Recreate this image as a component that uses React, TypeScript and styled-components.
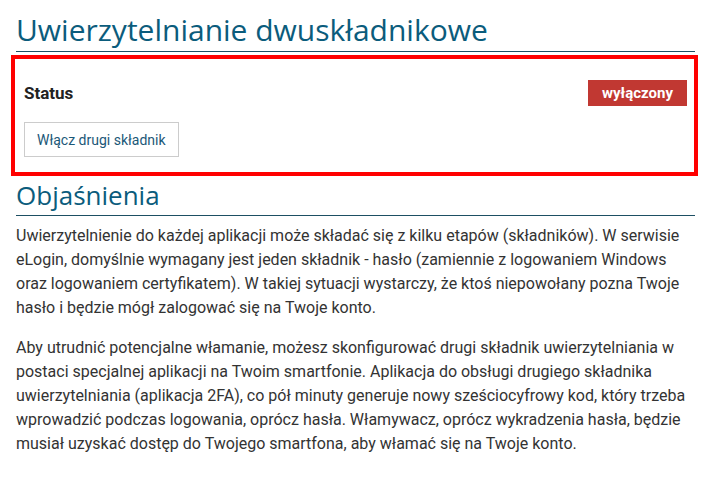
import React from 'react';
import styled, { createGlobalStyle } from 'styled-components';

const GlobalStyle = createGlobalStyle`
  html, body {
    margin: 0;
    padding: 0;
    background: #fff;
  }
  body {
    font-family: Roboto, "Liberation Sans", sans-serif;
    color: #333;
  }
`;

const Page = styled.div`
  padding: 0 11px 0 16px;
`;

const SectionTitle = styled.h1<{ $size: number; $line: number; $top: number; $pad: number }>`
  margin: ${(p) => p.$top}px 0 0;
  padding-bottom: ${(p) => p.$pad}px;
  font-family: "Open Sans", "Noto Sans", sans-serif;
  font-weight: 400;
  font-size: ${(p) => p.$size}px;
  line-height: ${(p) => p.$line}px;
  color: #0b5c7c;
  border-bottom: 1px solid #1d4f63;
`;

const StatusBox = styled.section`
  margin: 3px -3px 0 -5px;
  border: 4px solid #ff0000;
  padding: 21px 7px 15px 9px;
  display: flex;
  flex-direction: column;
  align-items: flex-start;
  gap: 16px;
`;

const StatusRow = styled.div`
  align-self: stretch;
  display: flex;
  align-items: center;
  justify-content: space-between;
  height: 26px;
`;

const StatusLabel = styled.span`
  font-size: 17px;
  font-weight: 700;
  color: #222;
`;

const Badge = styled.span`
  background: #c13832;
  color: #fff;
  font-weight: 700;
  font-size: 15px;
  line-height: 26px;
  padding: 0 14px;
`;

const ActionButton = styled.button`
  font-family: Roboto, "Liberation Sans", sans-serif;
  font-size: 14px;
  color: #1b5878;
  background: #fff;
  border: 1px solid #ccc;
  height: 35px;
  padding: 0 12px;
  cursor: pointer;
`;

const Paragraph = styled.p<{ $top: number }>`
  margin: ${(p) => p.$top}px 0 0;
  font-size: 16px;
  line-height: 24px;
  color: #333;
`;

export default function App() {
  return (
    <Page>
      <GlobalStyle />
      <SectionTitle $size={30} $line={33} $top={13} $pad={5}>
        Uwierzytelnianie dwuskładnikowe
      </SectionTitle>

      <StatusBox>
        <StatusRow>
          <StatusLabel>Status</StatusLabel>
          <Badge>wyłączony</Badge>
        </StatusRow>
        <ActionButton>Włącz drugi składnik</ActionButton>
      </StatusBox>

      <SectionTitle as="h2" $size={26} $line={29} $top={5} $pad={5}>
        Objaśnienia
      </SectionTitle>

      <Paragraph $top={8}>
        Uwierzytelnienie do każdej aplikacji może składać się z kilku etapów (składników). W serwisie
        eLogin, domyślnie wymagany jest jeden składnik - hasło (zamiennie z logowaniem Windows
        oraz logowaniem certyfikatem). W takiej sytuacji wystarczy, że ktoś niepowołany pozna Twoje
        hasło i będzie mógł zalogować się na Twoje konto.
      </Paragraph>
      <Paragraph $top={16}>
        Aby utrudnić potencjalne włamanie, możesz skonfigurować drugi składnik uwierzytelniania w
        postaci specjalnej aplikacji na Twoim smartfonie. Aplikacja do obsługi drugiego składnika
        uwierzytelniania (aplikacja 2FA), co pół minuty generuje nowy sześciocyfrowy kod, który trzeba
        wprowadzić podczas logowania, oprócz hasła. Włamywacz, oprócz wykradzenia hasła, będzie
        musiał uzyskać dostęp do Twojego smartfona, aby włamać się na Twoje konto.
      </Paragraph>
    </Page>
  );
}
